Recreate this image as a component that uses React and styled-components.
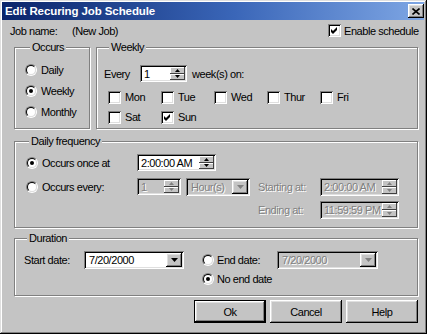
import React from 'react';
import styled, { createGlobalStyle, css } from 'styled-components';

const face = '#c4c4c4';

const GlobalStyle = createGlobalStyle`
  * { box-sizing: border-box; }
  html, body { margin: 0; padding: 0; background: ${face}; }
  body {
    font-family: "Liberation Sans", Arial, sans-serif;
    font-size: 11px;
    letter-spacing: -0.45px;
    color: #000;
  }
`;

const sunken = css`
  box-shadow: inset 1px 1px #808080, inset -1px -1px #fff, inset 2px 2px #000, inset -2px -2px #dfdfdf;
`;
const raised = css`
  box-shadow: inset -1px -1px #000, inset 1px 1px #fff, inset -2px -2px #808080, inset 2px 2px #dfdfdf;
`;
const dimText = css`
  color: #808080;
  text-shadow: 1px 1px #fff;
`;

const Window = styled.div`
  width: 427px;
  height: 334px;
  padding: 2px 3px 3px 2px;
  background: ${face};
  box-shadow: inset -1px -1px #000, inset 1px 1px #dfdfdf, inset -2px -2px #808080, inset 2px 2px #fff;
  display: flex;
  flex-direction: column;
`;

const TitleBar = styled.div`
  height: 18px;
  flex: none;
  display: flex;
  align-items: center;
  padding: 0 0 0 3px;
  background: linear-gradient(90deg, #0a246a 0%, #3a66b8 55%, #7ea6e4 100%);
`;

const Title = styled.span`
  color: #fff;
  font-weight: bold;
  font-size: 11.5px;
  letter-spacing: -0.1px;
`;

const CloseBtn = styled.span`
  margin-left: auto;
  width: 16px;
  height: 14px;
  background: ${face};
  ${raised};
  display: flex;
  align-items: center;
  justify-content: center;
`;

const Content = styled.div`
  flex: 1;
  padding: 0 6px 0 10px;
  display: flex;
  flex-direction: column;
`;

const Header = styled.div`
  height: 21px;
  flex: none;
  display: flex;
  align-items: center;
  margin-left: -2px;
`;

const JobLabel = styled.span`
  width: 62px;
`;

const JobName = styled.span`
  flex: 1;
`;

const Labelled = styled.label`
  display: flex;
  align-items: center;
  gap: ${p => p.$gap ?? 4}px;
  width: ${p => (p.$w ? `${p.$w}px` : 'auto')};
  height: ${p => p.$h ?? 20}px;
  flex: none;
  white-space: nowrap;
  ${p => p.$dim && dimText};
`;

const Box = styled.span`
  width: 13px;
  height: 13px;
  flex: none;
  background: #fff;
  ${sunken};
  display: flex;
  align-items: center;
  justify-content: center;
`;

const RadioOuter = styled.span`
  width: 12px;
  height: 12px;
  flex: none;
  border-radius: 50%;
  border: 1px solid;
  border-color: #808080 #fff #fff #808080;
  display: flex;
`;

const RadioInner = styled.span`
  flex: 1;
  border-radius: 50%;
  border: 1px solid;
  border-color: #000 #dfdfdf #dfdfdf #000;
  background: #fff;
  display: flex;
  align-items: center;
  justify-content: center;
`;

const Dot = styled.span`
  width: 4px;
  height: 4px;
  border-radius: 50%;
  background: #000;
`;

const Group = styled.div`
  border: 1px solid #808080;
  box-shadow: inset 1px 1px #fff, 1px 1px #fff;
  height: ${p => p.$h}px;
  width: ${p => (p.$w ? `${p.$w}px` : 'auto')};
  flex: ${p => (p.$grow ? '1' : 'none')};
  margin-top: ${p => p.$mt ?? 0}px;
  padding: 0 0 0 ${p => p.$pl ?? 0}px;
`;

const GroupTitle = styled.span`
  display: block;
  width: fit-content;
  margin: -7px 0 0 ${p => p.$ml ?? 4}px;
  padding: 0 2px;
  line-height: 13px;
  background: ${face};
`;

const TopRow = styled.div`
  display: flex;
  flex: none;
  gap: 6px;
  margin: 6px 0 0 2px;
`;

const Stack = styled.div`
  display: flex;
  flex-direction: column;
  padding-top: ${p => p.$pt ?? 0}px;
`;

const Row = styled.div`
  display: flex;
  align-items: center;
  height: ${p => p.$h ?? 17}px;
  margin-top: ${p => p.$mt ?? 0}px;
  margin-left: ${p => p.$ml ?? 0}px;
`;

const DayGrid = styled.div`
  display: grid;
  grid-template-columns: repeat(5, 53px);
  grid-auto-rows: 20px;
  margin: 5px 0 0 4px;
`;

const Text = styled.span`
  width: ${p => (p.$w ? `${p.$w}px` : 'auto')};
  margin-left: ${p => p.$ml ?? 0}px;
  white-space: nowrap;
  flex: none;
  ${p => p.$dim && dimText};
`;

const Field = styled.div`
  display: flex;
  width: ${p => p.$w}px;
  height: ${p => p.$h ?? 17}px;
  margin-left: ${p => p.$ml ?? 0}px;
  padding: 2px;
  flex: none;
  background: ${p => (p.$dim ? face : '#fff')};
  ${sunken};
  ${p => p.$dim && dimText};
`;

const FieldText = styled.span`
  flex: 1;
  display: flex;
  align-items: center;
  padding-left: ${p => p.$pl ?? 2}px;
  overflow: hidden;
  white-space: nowrap;
`;

const Spin = styled.div`
  width: 15px;
  display: flex;
  flex-direction: column;
`;

const SpinBtn = styled.span`
  flex: 1;
  background: ${face};
  box-shadow: inset -1px -1px #404040, inset 1px 1px #fff;
  display: flex;
  align-items: center;
  justify-content: center;
`;

const DropBtn = styled.span`
  width: 16px;
  background: ${face};
  ${raised};
  display: flex;
  align-items: center;
  justify-content: center;
`;

const GroupWide = styled(Group)`
  margin-left: 2px;
`;

const Buttons = styled.div`
  display: flex;
  flex: none;
  justify-content: flex-end;
  gap: 4px;
  margin-top: 4px;
`;

const Button = styled.span`
  width: 72px;
  height: 23px;
  display: flex;
  align-items: center;
  justify-content: center;
  background: ${face};
  ${raised};
  ${p => p.$default && css`
    border: 1px solid #000;
  `};
`;

const Arrow = ({ up, dim }) => (
  <svg width="5" height="3" viewBox="0 0 5 3">
    <path d={up ? 'M2.5 0 L5 3 H0 Z' : 'M0 0 H5 L2.5 3 Z'} fill={dim ? '#808080' : '#000'} />
  </svg>
);

const DownArrow = ({ dim }) => (
  <svg width="7" height="4" viewBox="0 0 7 4">
    <path d="M0 0 H7 L3.5 4 Z" fill={dim ? '#808080' : '#000'} />
  </svg>
);

const Check = () => (
  <svg width="7" height="7" viewBox="0 0 7 7">
    <path d="M0 2 L2 4 L6 0 V3 L2 7 L0 5 Z" fill="#000" />
  </svg>
);

const Radio = ({ checked }) => (
  <RadioOuter>
    <RadioInner>{checked && <Dot />}</RadioInner>
  </RadioOuter>
);

const CheckItem = ({ label, checked }) => (
  <Labelled>
    <Box>{checked && <Check />}</Box>
    {label}
  </Labelled>
);

const SpinField = ({ value, w, h, dim, ml }) => (
  <Field $w={w} $h={h} $dim={dim} $ml={ml}>
    <FieldText>{value}</FieldText>
    <Spin>
      <SpinBtn><Arrow up dim={dim} /></SpinBtn>
      <SpinBtn><Arrow dim={dim} /></SpinBtn>
    </Spin>
  </Field>
);

const Combo = ({ value, w, dim, ml }) => (
  <Field $w={w} $h={18} $dim={dim} $ml={ml}>
    <FieldText $pl={3}>{value}</FieldText>
    <DropBtn><DownArrow dim={dim} /></DropBtn>
  </Field>
);

const days = [
  ['Mon', false], ['Tue', false], ['Wed', false], ['Thur', false], ['Fri', false],
  ['Sat', false], ['Sun', true],
];

export default function App() {
  return (
    <>
      <GlobalStyle />
      <Window>
        <TitleBar>
          <Title>Edit Recuring Job Schedule</Title>
          <CloseBtn>
            <svg width="8" height="7" viewBox="0 0 8 7">
              <path d="M0.5 0.5 L7.5 6.5 M7.5 0.5 L0.5 6.5" stroke="#000" strokeWidth="1.6" />
            </svg>
          </CloseBtn>
        </TitleBar>
        <Content>
          <Header>
            <JobLabel>Job name:</JobLabel>
            <JobName>(New Job)</JobName>
            <Labelled $w={90} $gap={3}>
              <Box><Check /></Box>
              Enable schedule
            </Labelled>
          </Header>

          <TopRow>
            <Group $w={76} $h={82} $pl={10}>
              <GroupTitle $ml={5}>Occurs</GroupTitle>
              <Stack $pt={5}>
                <Labelled $h={21}><Radio />Daily</Labelled>
                <Labelled $h={21}><Radio checked />Weekly</Labelled>
                <Labelled $h={21}><Radio />Monthly</Labelled>
              </Stack>
            </Group>
            <Group $grow $h={82} $pl={7}>
              <GroupTitle $ml={5}>Weekly</GroupTitle>
              <Row $mt={11}>
                <Text $w={36}>Every</Text>
                <SpinField value="1" w={47} />
                <Text $ml={5}>week(s) on:</Text>
              </Row>
              <DayGrid>
                {days.map(([d, c]) => <CheckItem key={d} label={d} checked={c} />)}
              </DayGrid>
            </Group>
          </TopRow>

          <GroupWide $h={87} $mt={12} $pl={11}>
            <GroupTitle $ml={3}>Daily frequency</GroupTitle>
            <Row $mt={6}>
              <Labelled $w={111} $h={17}><Radio checked />Occurs once at</Labelled>
              <SpinField value="2:00:00 AM" w={79} />
            </Row>
            <Row $mt={7}>
              <Labelled $w={111} $h={17}><Radio />Occurs every:</Labelled>
              <SpinField value="1" w={44} dim />
              <Combo value="Hour(s)" w={64} dim ml={5} />
              <Text $w={62} $ml={8} $dim>Starting at:</Text>
              <SpinField value="2:00:00 AM" w={79} h={18} dim />
            </Row>
            <Row $mt={6} $ml={232}>
              <Text $w={62} $dim>Ending at:</Text>
              <SpinField value="11:59:59 PM" w={79} h={18} dim />
            </Row>
          </GroupWide>

          <GroupWide $h={58} $mt={10} $pl={9}>
            <GroupTitle $ml={3}>Duration</GroupTitle>
            <Row $mt={6} $h={18}>
              <Text $w={60}>Start date:</Text>
              <Combo value="7/20/2000" w={100} />
              <Labelled $w={75} $h={18} $gap={3} style={{ marginLeft: 18 }}>
                <Radio />End date:
              </Labelled>
              <Combo value="7/20/2000" w={101} dim />
            </Row>
            <Row $mt={1} $h={18} $ml={178}>
              <Labelled $h={18} $gap={3}><Radio checked />No end date</Labelled>
            </Row>
          </GroupWide>

          <Buttons>
            <Button $default>Ok</Button>
            <Button>Cancel</Button>
            <Button>Help</Button>
          </Buttons>
        </Content>
      </Window>
    </>
  );
}
